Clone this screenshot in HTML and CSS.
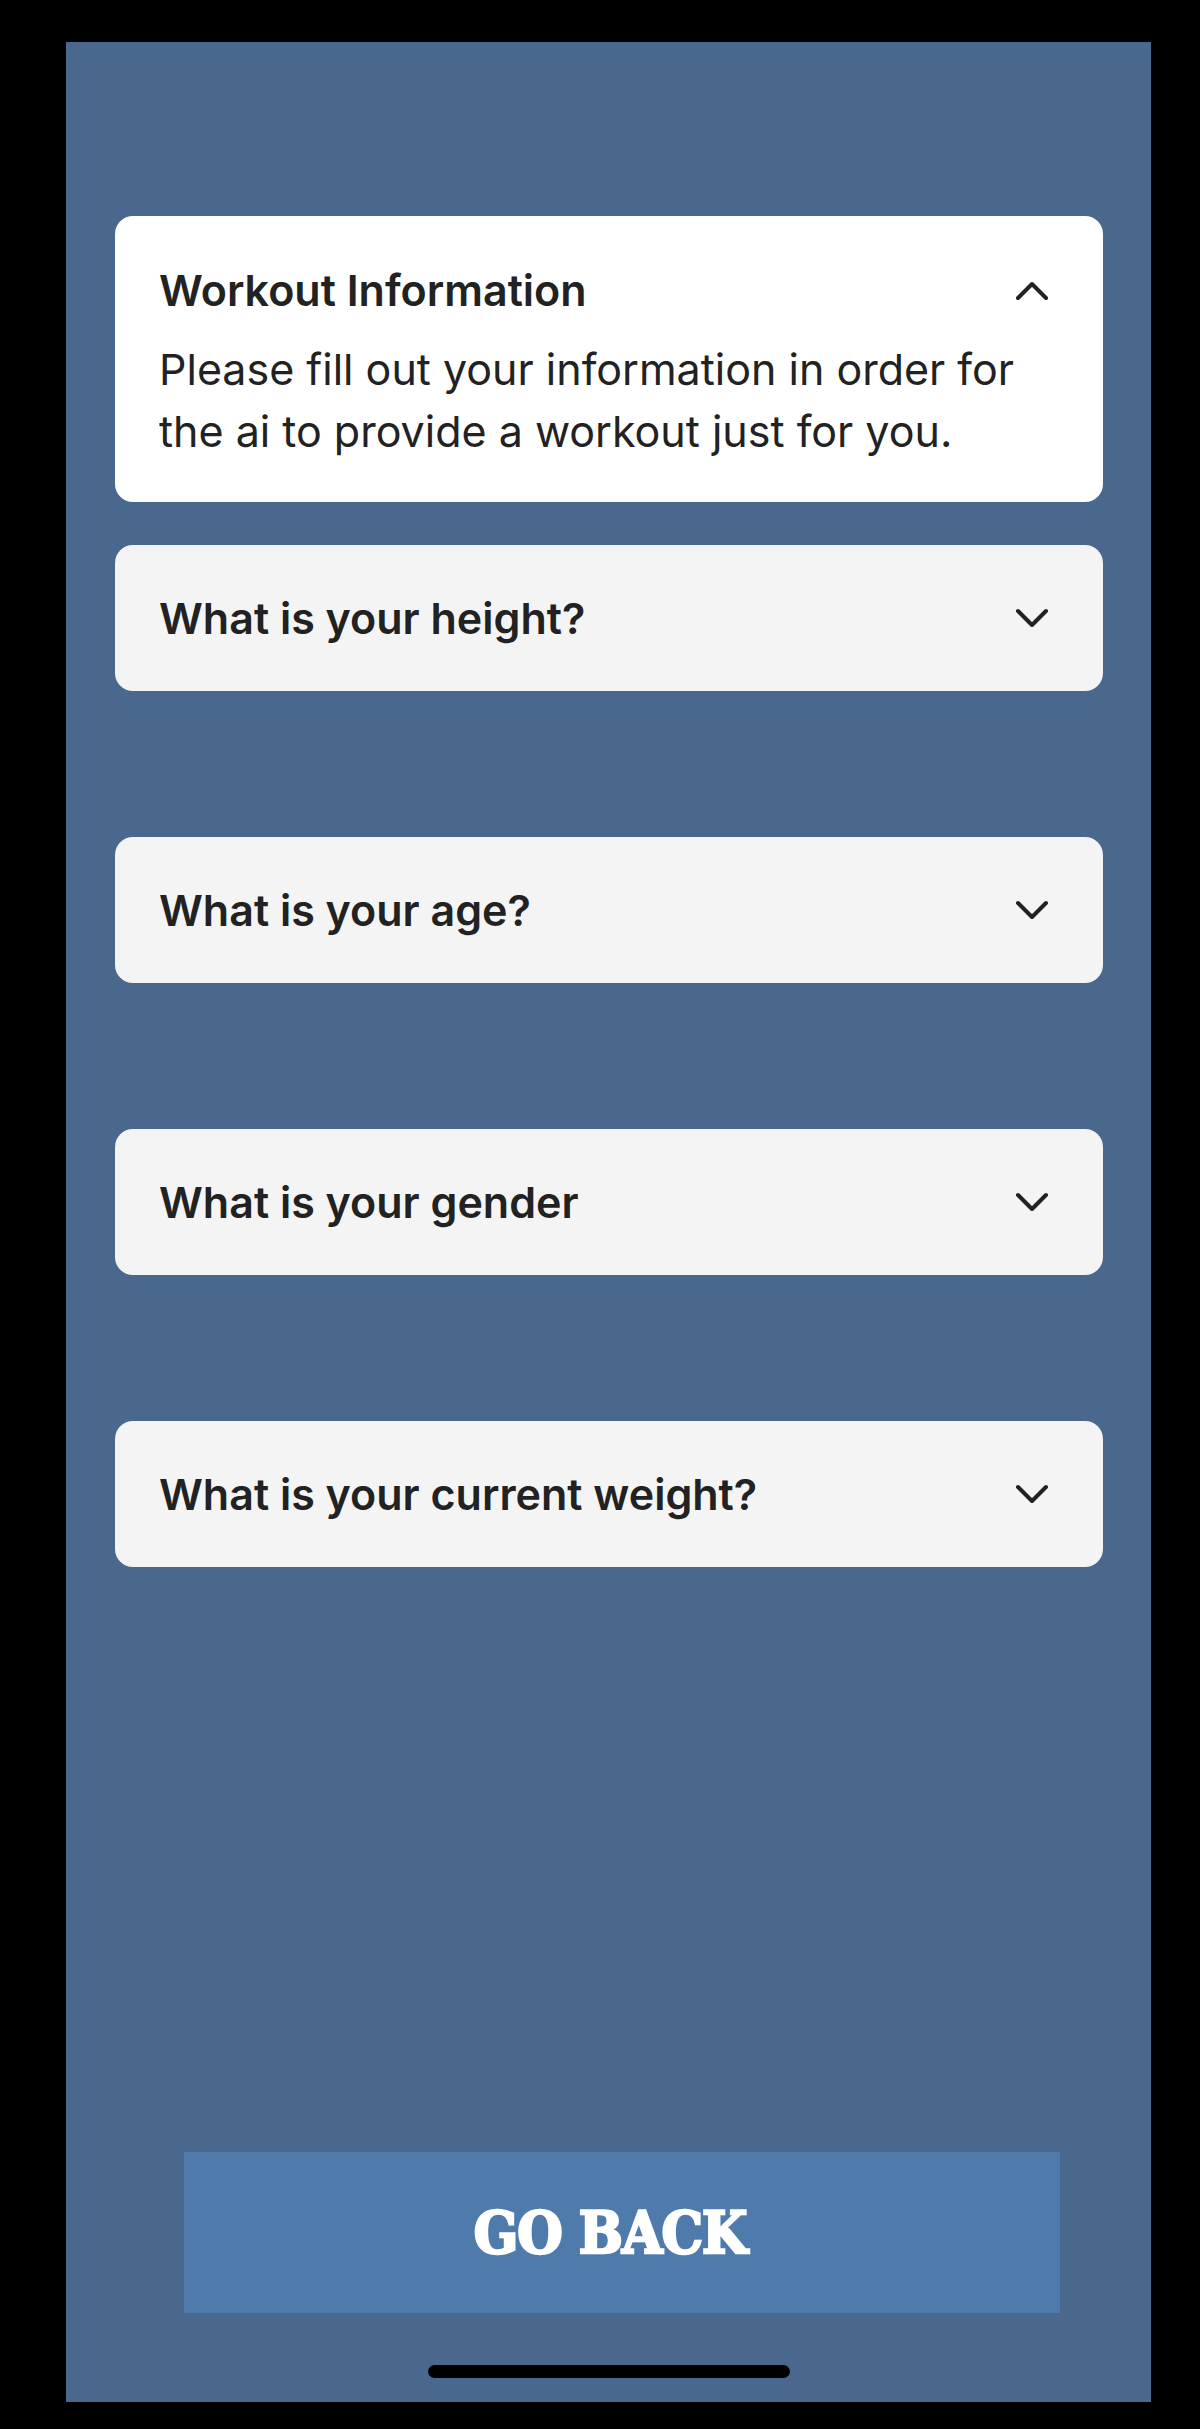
FILE: index.html
```html
<!DOCTYPE html>
<html lang="en">
<head>
  <meta charset="UTF-8">
  <meta name="viewport" content="width=device-width, initial-scale=1.0">
  <title>Workout Information</title>
  <link rel="stylesheet" href="styles.css">
</head>
<body>
  <div class="screen">
    <div class="info-card">
      <div class="card-head">
        <h2>Workout Information</h2>
        <svg class="chevron" width="34" height="22" viewBox="0 0 34 22"><path d="M3 19 L17 5 L31 19" /></svg>
      </div>
      <p>Please fill out your information in order for the ai to provide a workout just for you.</p>
    </div>

    <div class="questions">
      <div class="question">
        <span>What is your height?</span>
        <svg class="chevron" width="34" height="22" viewBox="0 0 34 22"><path d="M3 4 L17 18 L31 4" /></svg>
      </div>
      <div class="question">
        <span>What is your age?</span>
        <svg class="chevron" width="34" height="22" viewBox="0 0 34 22"><path d="M3 4 L17 18 L31 4" /></svg>
      </div>
      <div class="question">
        <span>What is your gender</span>
        <svg class="chevron" width="34" height="22" viewBox="0 0 34 22"><path d="M3 4 L17 18 L31 4" /></svg>
      </div>
      <div class="question">
        <span>What is your current weight?</span>
        <svg class="chevron" width="34" height="22" viewBox="0 0 34 22"><path d="M3 4 L17 18 L31 4" /></svg>
      </div>
    </div>

    <button class="back-btn">GO BACK</button>
    <div class="home-bar"></div>
  </div>
</body>
</html>
```

FILE: styles.css
```css
body {
  margin: 0;
  background-color: #000;
  font-family: Inter, "Noto Sans", sans-serif;
  color: #222;
}
.screen {
  box-sizing: border-box;
  margin: 42px 0 0 66px;
  width: 1085px;
  height: 2360px;
  background-color: #4a688d;
  padding: 174px 48px 24px 49px;
  display: flex;
  flex-direction: column;
}
.info-card {
  background-color: #fff;
  border-radius: 18px;
  padding: 50px 54px 40px 44px;
}
.card-head {
  display: flex;
  align-items: center;
  justify-content: space-between;
}
.card-head h2 {
  margin: 0;
  font-size: 43px;
  line-height: 48px;
  font-weight: 600;
}
.info-card p {
  margin: 24px 0 0;
  font-size: 43px;
  line-height: 62px;
  font-weight: 400;
}
.chevron path {
  fill: none;
  stroke: #222;
  stroke-width: 4;
  stroke-linecap: round;
  stroke-linejoin: round;
}
.questions {
  margin-top: 43px;
  display: flex;
  flex-direction: column;
  gap: 146px;
}
.question {
  height: 146px;
  box-sizing: border-box;
  background-color: #f4f4f4;
  border-radius: 18px;
  padding: 0 54px 0 44px;
  display: flex;
  align-items: center;
  justify-content: space-between;
  font-size: 43px;
  font-weight: 600;
}
.back-btn {
  margin: auto 43px 0 69px;
  height: 161px;
  border: none;
  background-color: #4e7bac;
  color: #fff;
  font-family: "DejaVu Serif Condensed", "DejaVu Serif", serif;
  font-weight: bold;
  font-size: 58px;
  letter-spacing: -1px;
  -webkit-text-stroke: 2.5px #fff;
  padding: 0 24px 0 0;
}
.home-bar {
  align-self: center;
  margin-top: 52px;
  width: 362px;
  height: 13px;
  border-radius: 7px;
  background-color: #000;
}
```
